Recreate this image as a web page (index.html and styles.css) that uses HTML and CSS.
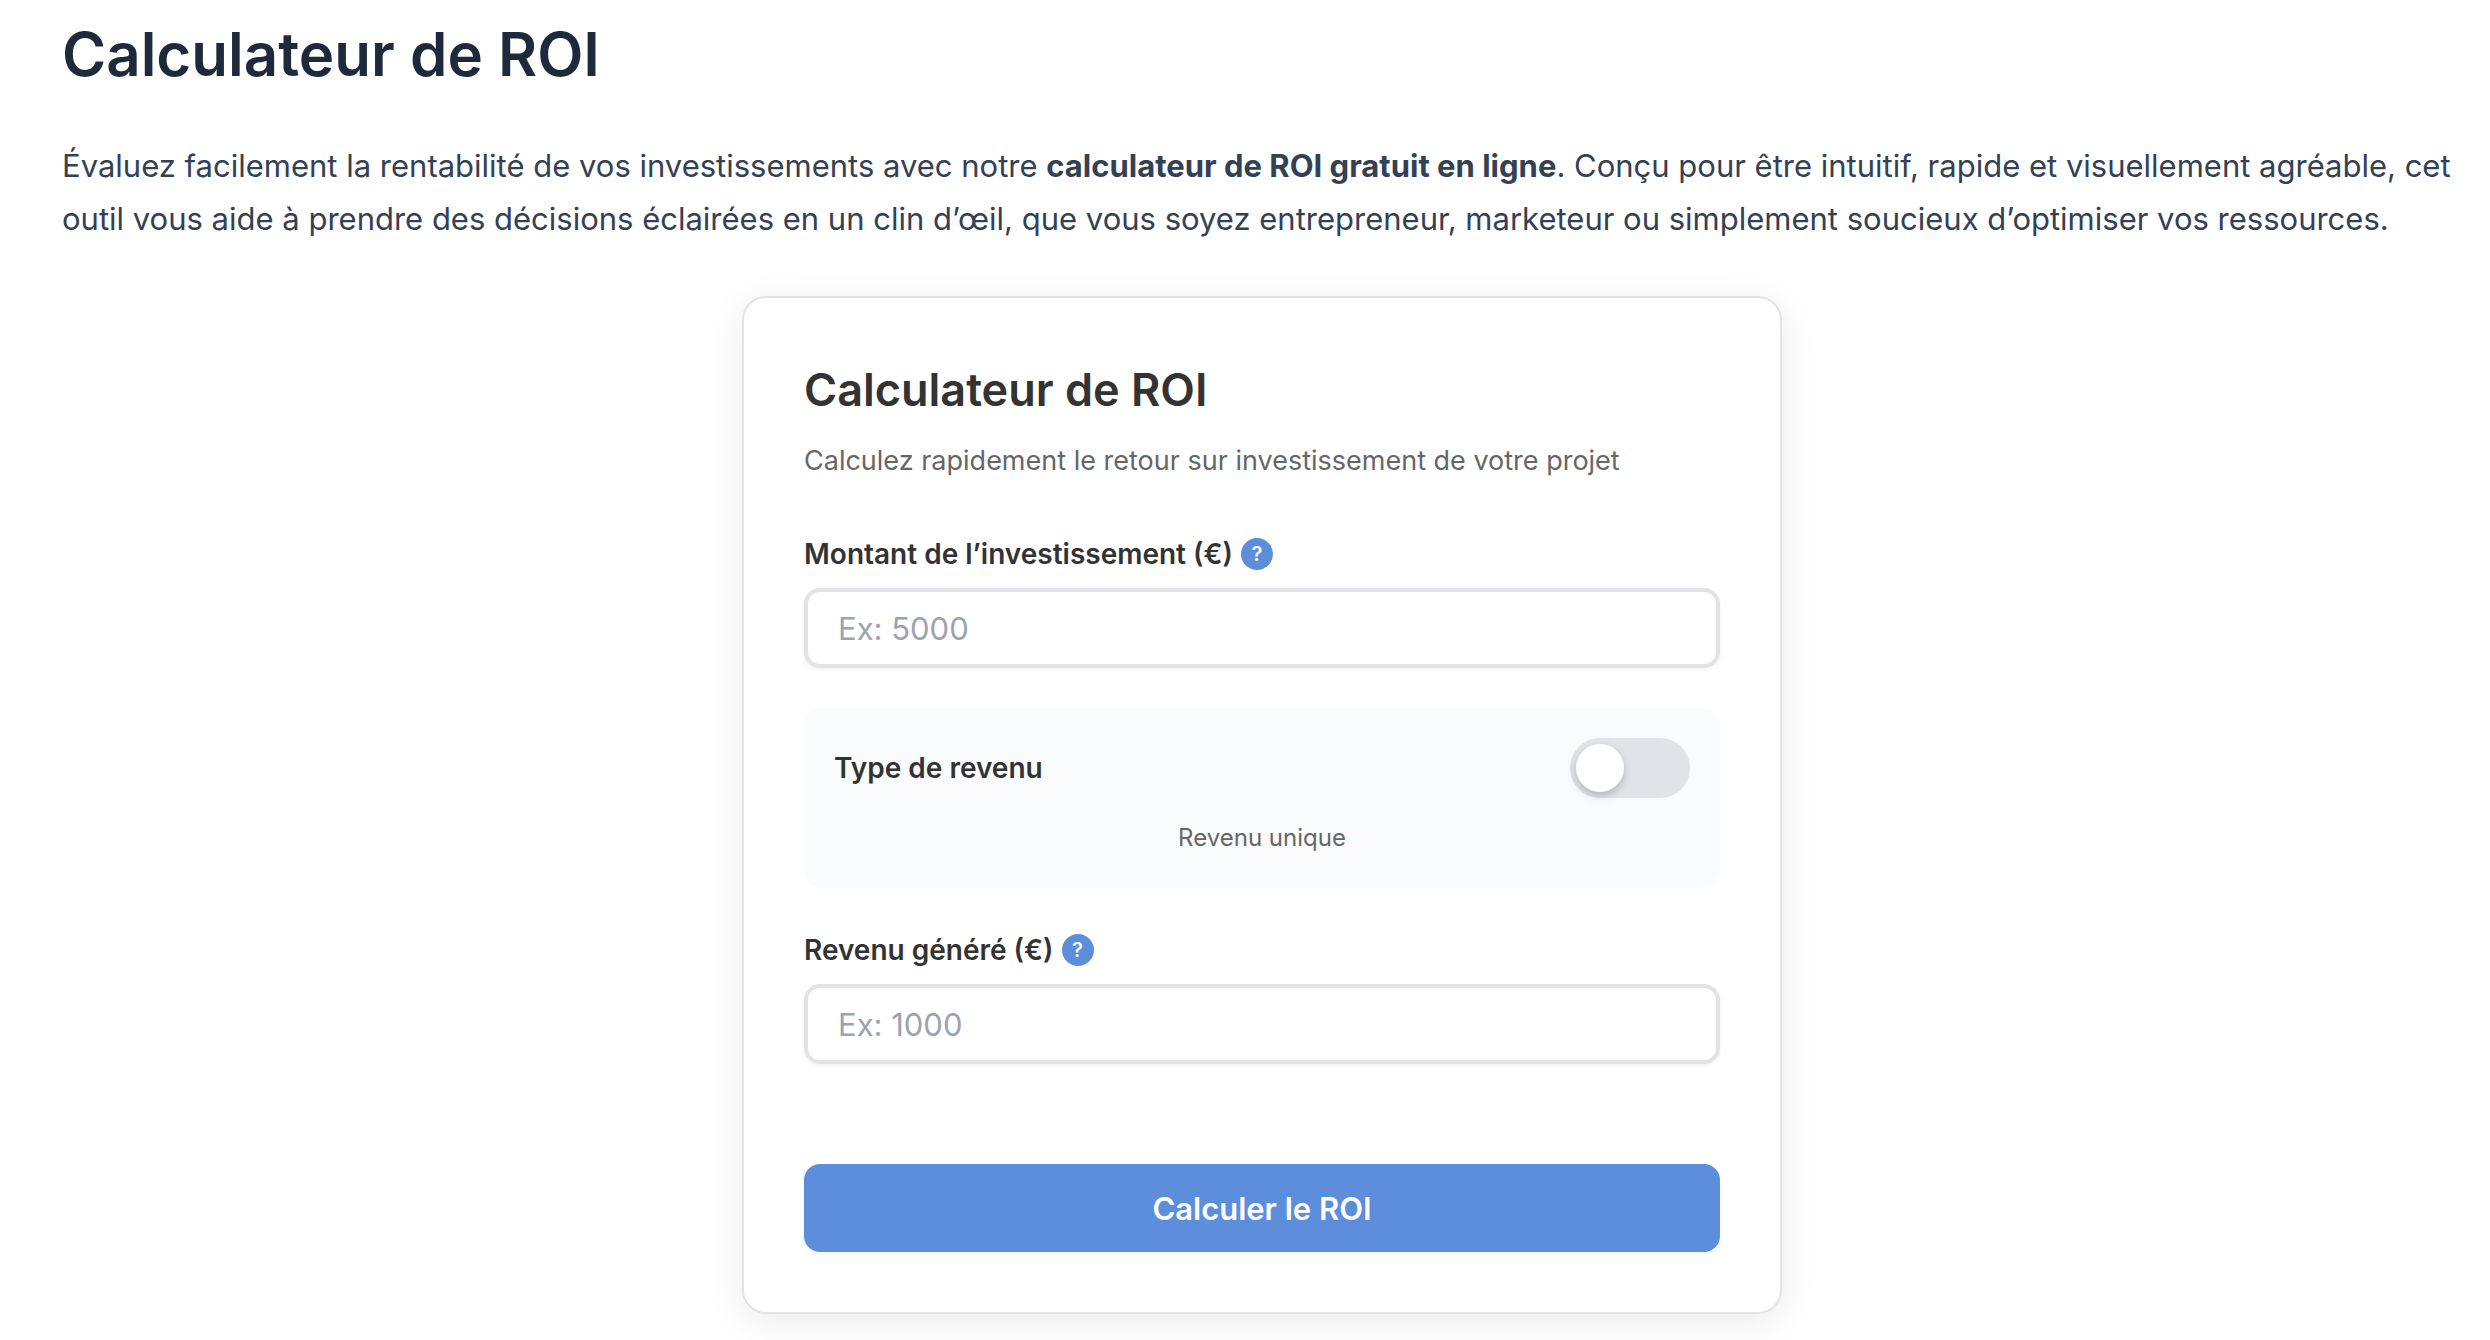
FILE: index.html
```html
<!DOCTYPE html>
<html lang="fr">
<head>
  <meta charset="UTF-8">
  <title>Calculateur de ROI</title>
  <meta name="viewport" content="width=device-width, initial-scale=1.0">
  <link rel="stylesheet" href="styles.css">
</head>
<body>
  <main class="page">
    <h1>Calculateur de ROI</h1>
    <p class="intro">Évaluez facilement la rentabilité de vos investissements avec notre <strong>calculateur de ROI gratuit en ligne</strong>. Conçu pour être intuitif, rapide et visuellement agréable, cet outil vous aide à prendre des décisions éclairées en un clin d’œil, que vous soyez entrepreneur, marketeur ou simplement soucieux d’optimiser vos ressources.</p>

    <form class="card">
      <h2>Calculateur de ROI</h2>
      <p class="subtitle">Calculez rapidement le retour sur investissement de votre projet</p>

      <div class="field">
        <div class="label-row">
          <label for="investment">Montant de l’investissement (€)</label>
          <span class="help">?</span>
        </div>
        <input class="input" id="investment" type="text" inputmode="decimal" placeholder="Ex: 5000">
      </div>

      <div class="toggle-box">
        <div class="toggle-row">
          <label for="income-type">Type de revenu</label>
          <input class="switch" id="income-type" type="checkbox">
        </div>
        <p class="toggle-text">Revenu unique</p>
      </div>

      <div class="field">
        <div class="label-row">
          <label for="income">Revenu généré (€)</label>
          <span class="help">?</span>
        </div>
        <input class="input" id="income" type="text" inputmode="decimal" placeholder="Ex: 1000">
      </div>

      <button class="submit" type="button">Calculer le ROI</button>
    </form>
  </main>
</body>
</html>
```

FILE: styles.css
```css
* { box-sizing: border-box; }
body { margin: 0; background: #fff; color: #333; font-family: Inter, "Liberation Sans", sans-serif; }
h1, h2, p { margin: 0; }
.page { padding: 18px 28px 26px 62px; }
h1 { font-size: 60px; line-height: 72px; font-weight: 600; color: #1e293b; margin-bottom: 49px; }
.intro { font-size: 31px; line-height: 53px; color: #334155; }

.card { max-width: 1040px; margin: 51px auto 0; padding: 60px; background: #fff; border: 2px solid #e1e3e7; border-radius: 24px; box-shadow: 0 8px 40px rgba(0, 0, 0, 0.08); }
h2 { font-size: 45px; line-height: 64px; font-weight: 600; margin-bottom: 16px; }
.subtitle { font-size: 27px; line-height: 46px; color: #666; margin-bottom: 54px; }

.label-row { display: flex; align-items: center; gap: 8px; margin-bottom: 18px; }
label { font-size: 28px; line-height: 32px; font-weight: 600; }
.help { display: flex; align-items: center; justify-content: center; width: 32px; height: 32px; border-radius: 50%; background: #5c8edc; color: #fff; font-size: 20px; font-weight: 600; }
.input { display: block; width: 100%; height: 80px; padding: 0 30px; border: 4px solid #e1e3e7; border-radius: 16px; background: #fff; color: #333; font-family: inherit; font-size: 31px; box-shadow: 0 2px 4px rgba(0, 0, 0, 0.05); }
.input::placeholder { color: #9ca3af; }

.toggle-box { margin: 40px 0 46px; padding: 30px; border-radius: 16px; background: #fafbfd; }
.toggle-row { display: flex; align-items: center; justify-content: space-between; }
.switch { appearance: none; width: 120px; height: 60px; margin: 0; padding: 6px; border-radius: 30px; background: #e1e3e7; cursor: pointer; }
.switch::before { content: ""; display: block; width: 48px; height: 48px; border-radius: 50%; background: #fff; box-shadow: 0 4px 8px rgba(0, 0, 0, 0.2); }
.switch:checked { background: #5c8edc; }
.switch:checked::before { margin-left: auto; }
.toggle-text { margin-top: 20px; font-size: 24px; line-height: 40px; color: #666; text-align: center; }

.submit { width: 100%; height: 88px; margin-top: 100px; border: 0; border-radius: 16px; background: #5c8edc; color: #fff; font-family: inherit; font-size: 31px; font-weight: 600; cursor: pointer; box-shadow: 0 2px 6px rgba(0, 0, 0, 0.05); }
```
